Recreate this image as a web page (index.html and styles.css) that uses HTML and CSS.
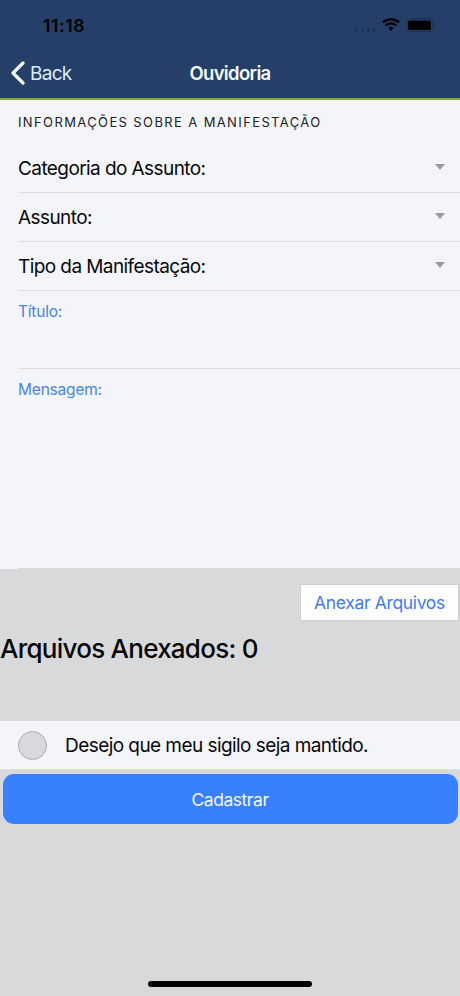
FILE: index.html
```
<!DOCTYPE html>
<html lang="pt-BR">
<head>
  <meta charset="UTF-8" />
  <meta name="viewport" content="width=device-width, initial-scale=1.0" />
  <title>Ouvidoria</title>
  <link rel="stylesheet" href="styles.css">
</head>
<body>
  <header class="header">
    <div class="status-bar">
      <span class="time">11:18</span>
      <div class="status-icons">
        <svg class="signal" width="22" height="4" viewBox="0 0 22 4">
          <rect x="1" width="3" height="4" rx="1" />
          <rect x="7" width="3" height="4" rx="1" />
          <rect x="13" width="3" height="4" rx="1" />
          <rect x="18.5" width="3" height="4" rx="1" />
        </svg>
        <svg class="wifi" width="18" height="13" viewBox="0 0 18 13">
          <path d="M1 4.4a11.6 11.6 0 0 1 16 0M3.9 7.4a7.4 7.4 0 0 1 10.2 0" fill="none" stroke="#000" stroke-width="2.4" />
          <path d="M9 12.8L6.3 10.1a3.8 3.8 0 0 1 5.4 0z" />
        </svg>
        <svg class="battery" width="31" height="14" viewBox="0 0 31 14">
          <rect x="0.5" y="0.5" width="26" height="13" rx="4" fill="none" stroke="#192e50" />
          <rect x="2" y="2.5" width="23" height="9.5" rx="2" />
          <path d="M28 4.5q3 2.5 0 5z" fill="#192e50" />
        </svg>
      </div>
    </div>
    <nav class="navbar">
      <a class="back" href="#">
        <svg width="14" height="24" viewBox="0 0 14 24">
          <path d="M12 2L2 12l10 10" fill="none" stroke="#f4f9ff" stroke-width="3.2" stroke-linecap="round" stroke-linejoin="round" />
        </svg>
        <span>Back</span>
      </a>
      <h1>Ouvidoria</h1>
    </nav>
  </header>

  <main>
    <form class="form">
      <h2>INFORMAÇÕES SOBRE A MANIFESTAÇÃO</h2>
      <div class="item select"><span>Categoria do Assunto:</span><i class="arrow"></i></div>
      <div class="item select"><span>Assunto:</span><i class="arrow"></i></div>
      <div class="item select"><span>Tipo da Manifestação:</span><i class="arrow"></i></div>
      <div class="item field"><span>Título:</span></div>
      <div class="item field message"><span>Mensagem:</span></div>
    </form>

    <section class="files">
      <button class="attach" type="button">Anexar Arquivos</button>
      <h3>Arquivos Anexados: 0</h3>
    </section>

    <label class="secrecy">
      <i class="check"></i>
      <span>Desejo que meu sigilo seja mantido.</span>
    </label>

    <button class="submit" type="button">Cadastrar</button>
  </main>

  <footer class="home"><div class="home-bar"></div></footer>
</body>
</html>
```
FILE: styles.css
```
* {
  box-sizing: border-box;
}
body {
  margin: 0;
  height: 996px;
  display: flex;
  flex-direction: column;
  overflow: hidden;
  background-color: #d8d9db;
  color: #080808;
  font-family: Inter, "Liberation Sans", sans-serif;
  font-size: 19px;
}
h1, h2, h3 {
  margin: 0;
}
button {
  font-family: inherit;
  padding: 0;
}
.header {
  height: 100px;
  background-color: #253f69;
  border-bottom: 2px solid #7fa536;
}
.status-bar {
  height: 49px;
  padding: 2px 23px 0 43px;
  display: flex;
  align-items: center;
  justify-content: space-between;
}
.time {
  color: #000;
  font-size: 17.5px;
  font-weight: 600;
  letter-spacing: 0.6px;
}
.status-icons {
  display: flex;
  align-items: center;
}
.signal {
  margin: 9px 6px 0 0;
  fill: #1e355a;
}
.wifi {
  margin: 0 6px 2px 0;
}
.battery {
  margin-bottom: 1px;
}
.navbar {
  height: 48px;
  display: grid;
  grid-template-columns: 1fr auto 1fr;
  align-items: center;
  color: #f4f9ff;
}
.back {
  display: flex;
  align-items: center;
  gap: 5px;
  padding-left: 11px;
  color: #dcecff;
  text-decoration: none;
  letter-spacing: -0.7px;
}
h1 {
  font-size: 18.5px;
  font-weight: 600;
  letter-spacing: -0.65px;
}
.form {
  height: 469px;
  padding-left: 18px;
  background-color: #f4f5fa;
}
h2 {
  height: 44px;
  line-height: 44px;
  font-size: 13px;
  font-weight: 400;
  letter-spacing: 1.38px;
  color: #222;
}
.item {
  border-bottom: 1px solid #dedfe3;
}
.select {
  height: 49px;
  padding-right: 15px;
  display: flex;
  align-items: center;
  justify-content: space-between;
  letter-spacing: -0.58px;
}
.arrow {
  margin-bottom: 2px;
  border: 5.5px solid transparent;
  border-top: 6px solid #9a9b9e;
  border-bottom: 0;
}
.field {
  height: 78px;
  padding-top: 11px;
  font-size: 15.5px;
  line-height: 20px;
  color: #4584e8;
  letter-spacing: -0.2px;
}
.message {
  height: 200px;
  border-bottom-color: #d8d9db;
}
.files {
  height: 152px;
  padding-top: 15px;
  display: flex;
  flex-direction: column;
}
.attach {
  align-self: flex-end;
  width: 159px;
  height: 37px;
  margin-right: 1px;
  border: 1px solid #cfd0d2;
  background-color: #fff;
  color: #407cf0;
  font-size: 17.5px;
  letter-spacing: -0.35px;
}
h3 {
  margin-top: 12px;
  font-size: 26px;
  line-height: 32px;
  font-weight: 500;
  letter-spacing: -0.75px;
}
.secrecy {
  height: 49px;
  padding-left: 18px;
  display: flex;
  align-items: center;
  gap: 18px;
  background-color: #f4f5fa;
  border-bottom: 1px solid #dedfe3;
  letter-spacing: -0.56px;
}
.check {
  width: 29px;
  height: 29px;
  border: 1px solid #aaabad;
  border-radius: 50%;
  background-color: #d8d9db;
}
.submit {
  display: block;
  width: 455px;
  height: 50px;
  margin: 4px auto 0;
  border: 0;
  border-radius: 11px;
  background-color: #3880ff;
  color: #f4f9ff;
  font-size: 17.5px;
  letter-spacing: -0.45px;
}
.home {
  margin-top: auto;
  padding-bottom: 9px;
}
.home-bar {
  width: 164px;
  height: 6px;
  margin: 0 auto;
  border-radius: 3px;
  background-color: #000;
}
```
